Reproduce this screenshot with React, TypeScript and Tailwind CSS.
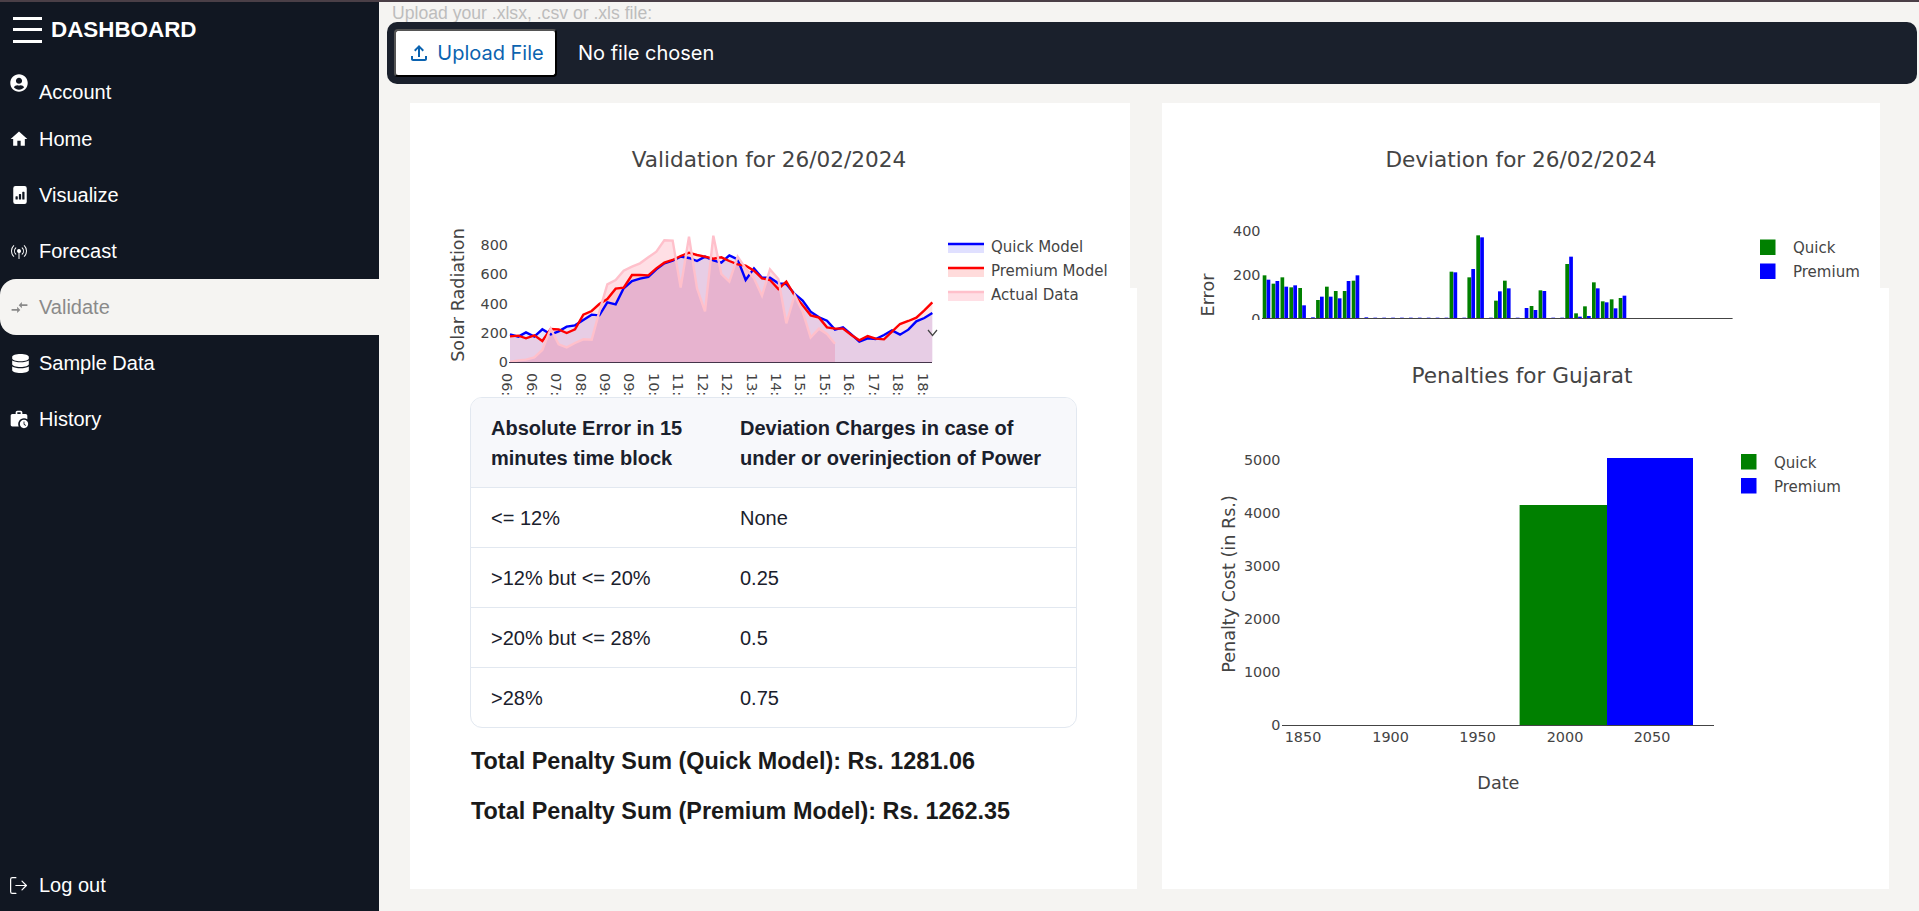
import React from "react";
import { BsFileBarGraphFill, BsBroadcastPin } from "react-icons/bs";
import { FaUserCircle, FaDatabase } from "react-icons/fa";
import { MdHome, MdCompareArrows, MdWorkHistory, MdOutlineFileUpload } from "react-icons/md";
import { LogOut } from "lucide-react";

const blue: [number, number][] = [[30,313],[55,320],[78,307],[103,320],[127,298],[152,313],[176,304],[200,290],[225,286],[250,270],[275,254],[298,256],[322,217],[347,223],[371,175],[396,153],[420,146],[445,141],[469,118],[493,100],[518,92],[542,80],[567,84],[591,93],[615,80],[640,91],[664,98],[688,76],[713,88],[737,150],[762,115],[786,143],[810,143],[835,160],[859,162],[884,192],[908,212],[932,245],[957,262],[981,272],[1005,299],[1029,292],[1054,313],[1078,335],[1103,325],[1127,327],[1152,315],[1176,301],[1200,314],[1225,299],[1249,274],[1273,264],[1297,249]];
const red: [number, number][] = [[30,319],[55,317],[78,325],[103,316],[127,333],[152,297],[176,298],[200,309],[225,298],[250,254],[275,243],[298,222],[322,207],[347,176],[371,173],[396,135],[420,135],[445,136],[469,115],[493,98],[518,90],[542,78],[567,68],[591,75],[615,80],[640,86],[664,82],[688,93],[713,103],[737,107],[762,122],[786,145],[810,150],[835,177],[859,155],[884,197],[908,226],[932,256],[957,263],[981,292],[1005,296],[1029,296],[1054,315],[1078,331],[1103,318],[1127,326],[1152,328],[1176,305],[1200,282],[1225,273],[1249,263],[1273,241],[1297,217]];
const pink: [number, number][] = [[30,396],[55,391],[78,389],[103,382],[127,360],[152,296],[176,343],[200,352],[225,339],[250,328],[275,329],[298,245],[322,163],[347,150],[371,122],[396,110],[420,100],[445,82],[469,65],[493,31],[518,32],[542,173],[567,20],[591,175],[615,244],[640,17],[664,132],[688,155],[713,80],[737,115],[762,145],[786,197],[810,118],[835,147],[859,280],[884,195],[908,245],[932,322],[957,296],[981,312],[1005,341]];

const line = (p: [number, number][]) => p.map(([x, y]) => `${500 + x / 3},${230 + y / 3}`).join(" ");
const area = (p: [number, number][]) =>
  `${500 + p[0][0] / 3},362 ${line(p)} ${500 + p[p.length - 1][0] / 3},362`;

const xLabels = ["06:", "06:", "07:", "08:", "09:", "09:", "10:", "11:", "12:", "12:", "13:", "14:", "15:", "15:", "16:", "17:", "18:", "18:"];

// tops of the bars in a 3x crop whose baseline is 280
const bars: [number, number][] = [[151,164],[176,168],[157,185],[187,181],[189,241],[280,277],[225,215],[185,215],[198,220],[198,168],[167,151],[280,277],[280,278],[280,278],[280,278],[280,278],[280,278],[280,278],[280,278],[280,278],[280,278],[140,142],[280,278],[157,132],[31,37],[280,278],[227,199],[167,190],[280,278],[280,249],[243,255],[196,198],[280,278],[280,278],[117,95],[265,275],[244,273],[172,190],[229,232],[223,250],[219,212]];

const chartText = "font-['DejaVu_Sans',Verdana,sans-serif] fill-[#444444]";
const title = `${chartText} text-[21.6px]`;
const axisTitle = `${chartText} text-[17.6px]`;
const tick = `${chartText} text-[14.4px]`;
const legend = `${chartText} text-[15px]`;

function ValidationChart() {
  return (
    <svg viewBox="410 103 720 294" width={720} height={294} className="block">
      <text x={769} y={159} textAnchor="middle" dominantBaseline="central" className={title}>Validation for 26/02/2024</text>
      <text transform="rotate(-90 458 295)" x={458} y={295} textAnchor="middle" dominantBaseline="central" className={axisTitle}>Solar Radiation</text>
      {[["800", 244.5], ["600", 274], ["400", 303.5], ["200", 333], ["0", 362]].map(([t, y]) => (
        <text key={t} x={508} y={y as number} textAnchor="end" dominantBaseline="central" className={tick}>{t}</text>
      ))}
      <polygon points={area(pink)} fill="#ffc0cb" fillOpacity={0.5} />
      <polygon points={area(blue)} fill="#0000ff" fillOpacity={0.1} />
      <polygon points={area(red)} fill="#ff0000" fillOpacity={0.1} />
      <polyline points={line(blue)} fill="none" stroke="#0000ff" strokeWidth={2.4} />
      <polyline points={line(red)} fill="none" stroke="#ff0000" strokeWidth={2.4} />
      <polyline points={line(pink)} fill="none" stroke="#ffc0cb" strokeWidth={2.4} />
      <line x1={509} x2={932} y1={362.5} y2={362.5} stroke="#44344a" strokeWidth={1} />
      {xLabels.map((t, i) => {
        const x = 507.3 + 24.43 * i;
        return (
          <text key={i} transform={`rotate(90 ${x} 373)`} x={x} y={373} dominantBaseline="central" className={tick}>{t}</text>
        );
      })}
      {[["Quick Model", 244, "#0000ff", 0.12], ["Premium Model", 268, "#ff0000", 0.14], ["Actual Data", 292, "#ffc0cb", 0.5]].map(([t, y, c, o]) => (
        <g key={t as string}>
          <rect x={948} y={y as number} width={36} height={9} fill={c as string} fillOpacity={o as number} />
          <line x1={948} x2={984} y1={y as number} y2={y as number} stroke={c as string} strokeWidth={2.4} />
          <text x={991} y={(y as number) + 3} dominantBaseline="central" className={legend}>{t}</text>
        </g>
      ))}
      <polyline points="928,330 932.5,335.5 937,330" fill="none" stroke="#444444" strokeWidth={1.2} />
    </svg>
  );
}

function DeviationChart() {
  return (
    <svg viewBox="1162 103 718 217" width={718} height={217} className="block">
      <text x={1521} y={159} textAnchor="middle" dominantBaseline="central" className={title}>Deviation for 26/02/2024</text>
      <text transform="rotate(-90 1208 295)" x={1208} y={295} textAnchor="middle" dominantBaseline="central" className={axisTitle}>Error</text>
      {[["400", 230.7], ["200", 275], ["0", 319]].map(([t, y]) => (
        <text key={t as string} x={1260.5} y={y as number} textAnchor="end" dominantBaseline="central" className={tick}>{t}</text>
      ))}
      {bars.map(([g, b], i) => {
        const x = 1262.7 + 8.9 * i;
        const base = 318.4;
        const gy = 225 + g / 3;
        const by = 225 + b / 3;
        return (
          <g key={i}>
            {g < 280 && <rect x={x} y={gy} width={3.7} height={base - gy} fill="#008000" />}
            <rect x={x + 3.9} y={by} width={3.7} height={base - by} fill="#0000ff" />
          </g>
        );
      })}
      <line x1={1262} x2={1732.6} y1={318.5} y2={318.5} stroke="#444444" strokeWidth={1} />
      <rect x={1760} y={239.5} width={15.5} height={15.5} fill="#008000" />
      <rect x={1760} y={263.5} width={15.5} height={15.5} fill="#0000ff" />
      <text x={1793} y={247.5} dominantBaseline="central" className={legend}>Quick</text>
      <text x={1793} y={271.5} dominantBaseline="central" className={legend}>Premium</text>
    </svg>
  );
}

function PenaltyChart() {
  return (
    <svg viewBox="1162 345 727 460" width={727} height={460} className="block">
      <text x={1522} y={375} textAnchor="middle" dominantBaseline="central" className={title}>Penalties for Gujarat</text>
      <text transform="rotate(-90 1228.6 584)" x={1228.6} y={584} textAnchor="middle" dominantBaseline="central" className={axisTitle}>Penalty Cost (in Rs.)</text>
      {[["5000", 459.5], ["4000", 512.5], ["3000", 565.5], ["2000", 618.5], ["1000", 671.5], ["0", 725]].map(([t, y]) => (
        <text key={t as string} x={1280.5} y={y as number} textAnchor="end" dominantBaseline="central" className={tick}>{t}</text>
      ))}
      <rect x={1519.6} y={505} width={87.4} height={220} fill="#008000" />
      <rect x={1607} y={458} width={86} height={267} fill="#0000ff" />
      <line x1={1282} x2={1714} y1={725.5} y2={725.5} stroke="#444444" strokeWidth={1} />
      {[["1850", 1303], ["1900", 1390.6], ["1950", 1477.6], ["2000", 1565], ["2050", 1652]].map(([t, x]) => (
        <text key={t as string} x={x as number} y={737} textAnchor="middle" dominantBaseline="central" className={tick}>{t}</text>
      ))}
      <text x={1498.4} y={783} textAnchor="middle" dominantBaseline="central" className={axisTitle}>Date</text>
      <rect x={1741} y={454} width={15.5} height={15.5} fill="#008000" />
      <rect x={1741} y={478} width={15.5} height={15.5} fill="#0000ff" />
      <text x={1774} y={462.5} dominantBaseline="central" className={legend}>Quick</text>
      <text x={1774} y={486.5} dominantBaseline="central" className={legend}>Premium</text>
    </svg>
  );
}

const menu = [
  { label: "Home", icon: <MdHome size={20} className="-ml-[1px]" /> },
  { label: "Visualize", icon: <BsFileBarGraphFill size={18} className="ml-[1px]" /> },
  { label: "Forecast", icon: <BsBroadcastPin size={16} className="ml-[1px]" /> },
  { label: "Validate", icon: <MdCompareArrows size={19} />, active: true },
  { label: "Sample Data", icon: <FaDatabase size={19} className="ml-[1px]" /> },
  { label: "History", icon: <MdWorkHistory size={20} className="-ml-[1px]" /> },
];

const rows = [
  ["<= 12%", "None"],
  [">12% but <= 20%", "0.25"],
  [">20% but <= 28%", "0.5"],
  [">28%", "0.75"],
];

export default function App() {
  return (
    <div className="w-[1919px] h-[911px] overflow-hidden flex flex-col bg-[#f5f4f2] font-['Liberation_Sans',Arial,sans-serif]">
      <div className="h-[2px] bg-[#4a3f47] shrink-0" />
      <div className="flex flex-1 min-h-0">
        <aside className="w-[379px] shrink-0 bg-[#111722] text-white flex flex-col">
          <div className="flex items-center h-[54px] pl-[13px] pt-[1px]">
            <div className="w-[29px] flex flex-col gap-[8.5px]">
              <span className="block h-[3px] bg-white" />
              <span className="block h-[3px] bg-white" />
              <span className="block h-[3px] bg-white" />
            </div>
            <span className="ml-[9px] text-[22.4px] font-bold">DASHBOARD</span>
          </div>
          <div className="h-[55px] flex pl-[10px]">
            <span className="mt-[18px] w-[29px]"><FaUserCircle size={18} /></span>
            <span className="mt-[23px] text-[20px] leading-[26px]">Account</span>
          </div>
          {menu.map((m) => (
            <div
              key={m.label}
              className={`h-[56px] flex items-center pl-[10px] ${m.active ? "bg-[#f5f4f2] text-[#8a8a8a] rounded-l-2xl" : ""}`}
            >
              <span className="w-[29px]">{m.icon}</span>
              <span className="text-[20px]">{m.label}</span>
            </div>
          ))}
          <div className="mt-auto mb-[13px] h-[26px] flex items-center pl-[8px]">
            <span className="w-[31px]"><LogOut size={21} strokeWidth={1.4} /></span>
            <span className="text-[20px]">Log out</span>
          </div>
        </aside>
        <main className="flex-1 min-w-0 flex flex-col">
          <div className="h-[20px] pl-[13px] text-[17.6px] leading-[22px] text-[#bdbdbd]">Upload your .xlsx, .csv or .xls file:</div>
          <div className="ml-[8px] mr-[2px] h-[62px] rounded-[10px] bg-[#1a202c] flex items-center pl-[7px] font-['Inter',sans-serif] text-[20px]">
            <div className="w-[163px] h-[48px] flex items-center justify-center gap-[6px] bg-white rounded-[4px] text-[#0b63b0] border-2 border-t-[#555] border-l-[#555] border-r-black border-b-black">
              <MdOutlineFileUpload size={24} />
              <span>Upload File</span>
            </div>
            <span className="ml-[21px] text-white">No file chosen</span>
          </div>
          <div className="flex mt-[19px] ml-[31px]">
            <div className="w-[727px] flex flex-col">
              <div className="w-[720px] h-[185px] bg-white relative z-10">
                <ValidationChart />
              </div>
              <div className="h-[601px] bg-white pt-[109px] pl-[60px]">
                <div className="w-[607px] rounded-xl border border-[#e2e8f0] overflow-hidden text-[20px] text-[#1a202c]">
                  <div className="grid grid-cols-[269px_1fr] bg-[#f7f8fb] border-b border-[#e2e8f0] h-[90px] items-center font-bold leading-[30px]">
                    <div className="pl-[20px] pr-[10px]">Absolute Error in 15 minutes time block</div>
                    <div className="pr-[20px]">Deviation Charges in case of under or overinjection of Power</div>
                  </div>
                  {rows.map((r, i) => (
                    <div key={i} className={`grid grid-cols-[269px_1fr] items-center ${i < 3 ? "h-[60px] border-b border-[#e2e8f0]" : "h-[59px]"}`}>
                      <div className="pl-[20px]">{r[0]}</div>
                      <div>{r[1]}</div>
                    </div>
                  ))}
                </div>
                <p className="mt-[19px] pl-[1px] text-[23.4px] leading-[28px] font-bold text-[#1a1a1a]">Total Penalty Sum (Quick Model): Rs. 1281.06</p>
                <p className="mt-[22px] pl-[1px] text-[23.4px] leading-[28px] font-bold text-[#1a1a1a]">Total Penalty Sum (Premium Model): Rs. 1262.35</p>
              </div>
            </div>
            <div className="ml-[25px] w-[727px] flex flex-col">
              <div className="w-[718px] h-[185px] bg-white relative z-10">
                <DeviationChart />
              </div>
              <div className="h-[601px] bg-white pt-[57px]">
                <PenaltyChart />
              </div>
            </div>
          </div>
        </main>
      </div>
    </div>
  );
}
